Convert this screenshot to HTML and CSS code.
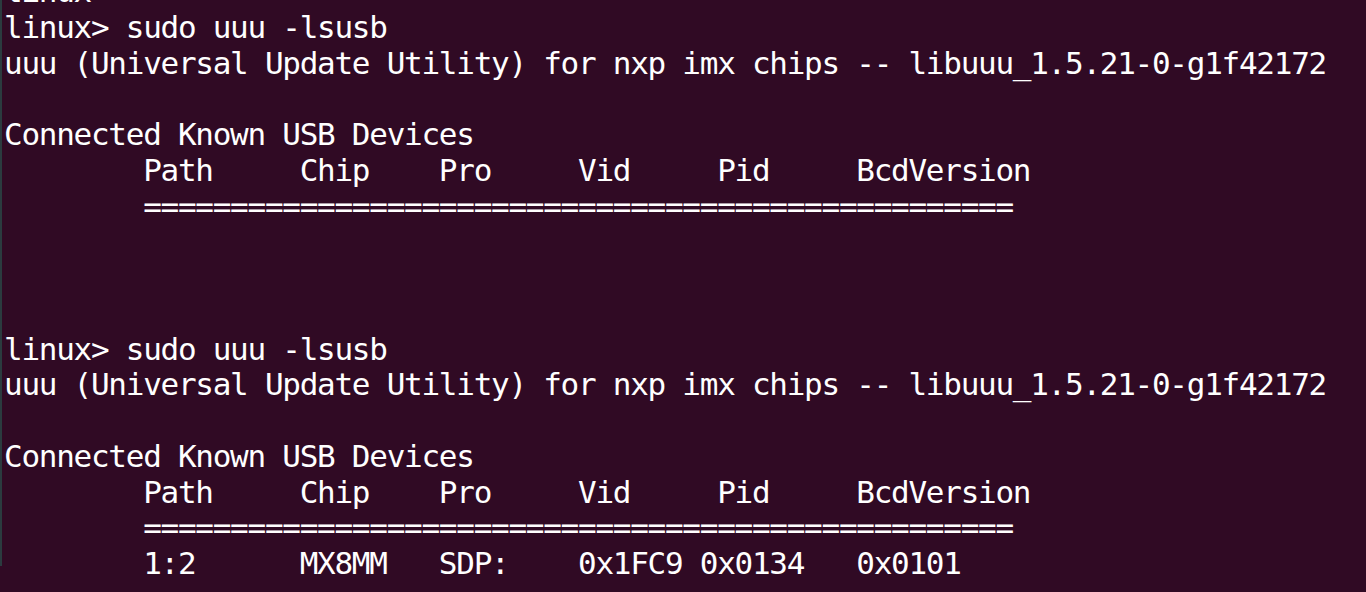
FILE: index.html
```html
<!DOCTYPE html>
<html lang="en">
<head>
<meta charset="utf-8">
<title>Terminal</title>
<link rel="stylesheet" href="styles.css">
</head>
<body>
<main class="terminal">
<pre class="output">linux&gt;
linux&gt; sudo uuu -lsusb
uuu (Universal Update Utility) for nxp imx chips -- libuuu_1.5.21-0-g1f42172

Connected Known USB Devices
        Path     Chip    Pro     Vid     Pid     BcdVersion
        ==================================================



linux&gt; sudo uuu -lsusb
uuu (Universal Update Utility) for nxp imx chips -- libuuu_1.5.21-0-g1f42172

Connected Known USB Devices
        Path     Chip    Pro     Vid     Pid     BcdVersion
        ==================================================
        1:2      MX8MM   SDP:    0x1FC9 0x0134   0x0101</pre>
</main>
</body>
</html>
```
FILE: styles.css
```css
html, body {
  margin: 0;
  padding: 0;
  height: 100%;
  background: #300a24;
  overflow: hidden;
}

.terminal {
  box-sizing: border-box;
  height: 100%;
  border-left: 2px solid #2b3b3f;
  padding-left: 2px;
  background: #300a24;
}

.output {
  margin: -26px 0 0 0;
  font-family: "DejaVu Sans Mono", "Liberation Mono", monospace;
  font-size: 31px;
  letter-spacing: -1.27px;
  line-height: 35.75px;
  color: #ffffff;
  white-space: pre;
}
```
